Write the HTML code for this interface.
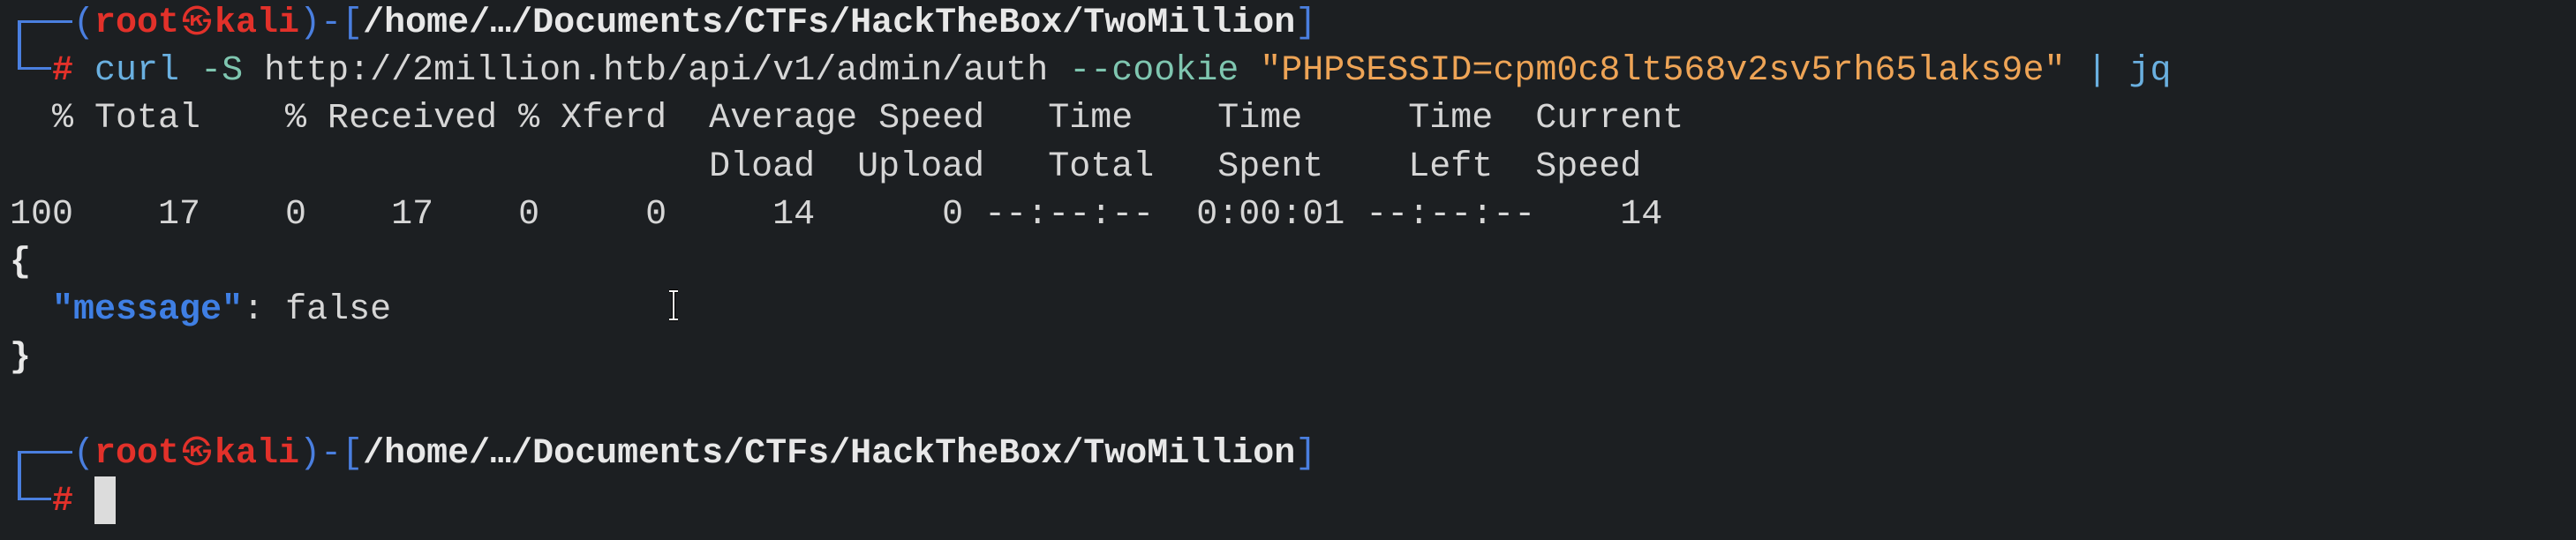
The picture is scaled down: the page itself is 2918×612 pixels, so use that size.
<!DOCTYPE html>
<html><head><meta charset="utf-8"><style>
html,body{margin:0;padding:0;background:#1c1f22;width:2918px;height:612px;overflow:hidden}
pre{position:absolute;left:11px;top:0;margin:0;font-family:"Liberation Mono","DejaVu Sans Mono",monospace;font-size:40px;line-height:54.2px;color:#d6d6d6;white-space:pre}
.r{color:#e2312a;font-weight:bold}
.b{color:#4a7fe0}
.w{color:#e8e8e8;font-weight:bold}
.c{color:#6ab0e0}
.t{color:#7fc6b0}
.o{color:#eea456}
.k{color:#3f7fe4;font-weight:bold}
.sk{display:inline-block;width:40px;overflow:visible;text-align:center;font-family:"Noto Sans CJK JP","DejaVu Sans",sans-serif;font-weight:normal;font-size:34px;line-height:40px;vertical-align:baseline}
.ln{position:absolute;background:#4a7fe0}
.cur{position:absolute;left:107px;top:540px;width:24px;height:54px;background:#dcdcdc}
</style></head><body>
<div class="ln" style="left:20px;top:23px;width:4px;height:56px"></div>
<div class="ln" style="left:20px;top:23px;width:62px;height:3px"></div>
<div class="ln" style="left:20px;top:76px;width:38px;height:3px"></div>
<div class="ln" style="left:20px;top:511px;width:4px;height:56px"></div>
<div class="ln" style="left:20px;top:511px;width:62px;height:3px"></div>
<div class="ln" style="left:20px;top:564px;width:38px;height:3px"></div>
<div class="cur"></div>
<svg style="position:absolute;left:756px;top:328px" width="14" height="36" viewBox="0 0 14 36"><path d="M2 2H12M7 2V34M2 34H12" stroke="#000" stroke-width="4" fill="none"/><path d="M2 2H12M7 2V34M2 34H12" stroke="#fff" stroke-width="2" fill="none"/></svg>
<pre>   <span class="b">(</span><span class="r">root<span class="sk">㉿</span>kali</span><span class="b">)-[</span><span class="w">/home/…/Documents/CTFs/HackTheBox/TwoMillion</span><span class="b">]</span>
  <span class="r">#</span> <span class="c">curl</span> <span class="t">-S</span> http://2million.htb/api/v1/admin/auth <span class="t">--cookie</span> <span class="o">"PHPSESSID=cpm0c8lt568v2sv5rh65laks9e"</span> <span class="c">|</span> <span class="c">jq</span>
  % Total    % Received % Xferd  Average Speed   Time    Time     Time  Current
                                 Dload  Upload   Total   Spent    Left  Speed
100    17    0    17    0     0     14      0 --:--:--  0:00:01 --:--:--    14
<span class="w">{</span>
  <span class="k">"message"</span>: false
<span class="w">}</span>

   <span class="b">(</span><span class="r">root<span class="sk">㉿</span>kali</span><span class="b">)-[</span><span class="w">/home/…/Documents/CTFs/HackTheBox/TwoMillion</span><span class="b">]</span>
  <span class="r">#</span> </pre>
</body></html>
